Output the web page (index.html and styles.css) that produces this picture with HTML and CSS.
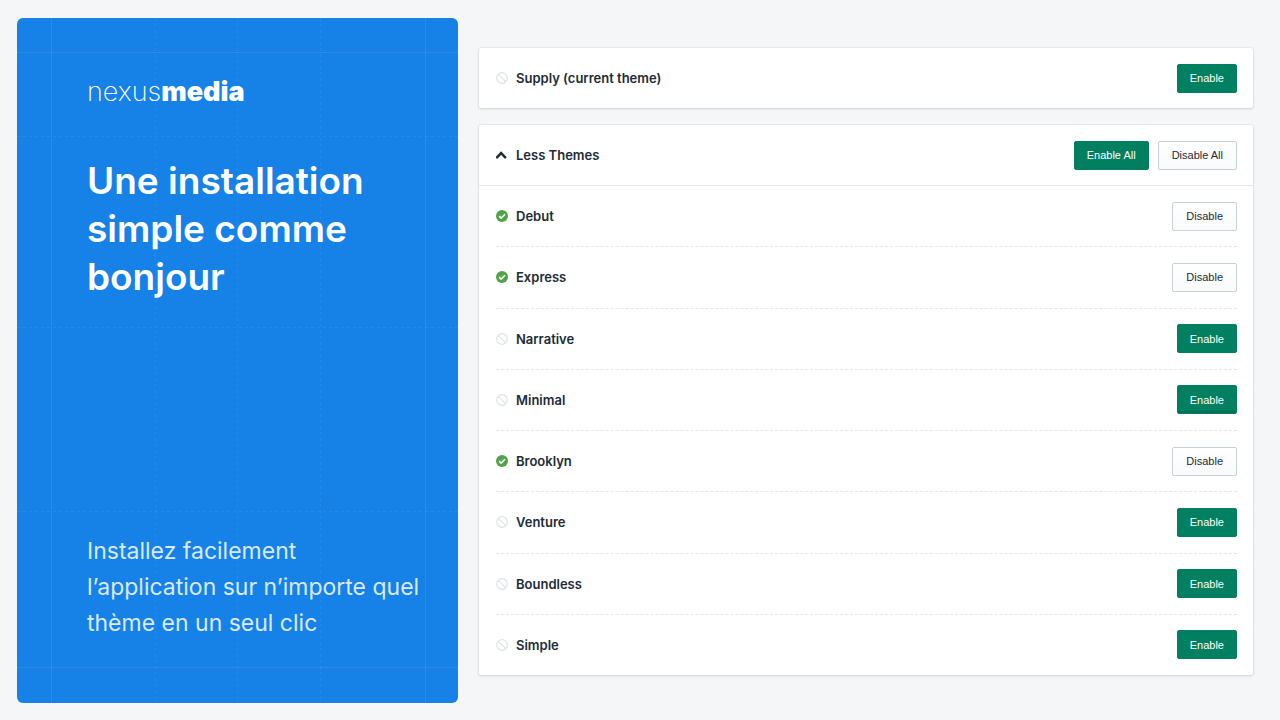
FILE: index.html
```html
<!DOCTYPE html>
<html lang="fr">
<head>
<meta charset="utf-8">
<meta name="viewport" content="width=device-width, initial-scale=1">
<title>nexusmedia</title>
<link rel="stylesheet" href="styles.css">
</head>
<body>
<svg class="sprite" aria-hidden="true">
  <symbol id="icon-off" viewBox="0 0 12 12"><g fill="none" stroke="#dfe3e8" stroke-width="1.2"><circle cx="6" cy="6" r="5.3"/><path d="M2.3 2.3l7.4 7.4"/></g></symbol>
  <symbol id="icon-on" viewBox="0 0 12 12"><circle cx="6" cy="6" r="6" fill="#50a346"/><path d="M3.1 6.1l2 2 3.9-3.9" fill="none" stroke="#fff" stroke-width="1.6"/></symbol>
  <symbol id="icon-up" viewBox="0 0 12 12"><path d="M1 8.3l4.1-4.2 4.1 4.2" fill="none" stroke="#212b36" stroke-width="2.5" stroke-linecap="round" stroke-linejoin="miter"/></symbol>
</svg>
<div class="page">
  <aside class="promo">
    <svg class="promo-grid" viewBox="0 0 441 685" preserveAspectRatio="none" aria-hidden="true">
      <path class="solid" d="M34.500 0V685M408.500 0V685M0 34.500H441M0 649.500H441"/>
      <path class="dashed" d="M138.500 0V685M220.500 0V685M303.500 0V685M0 118.500H441M0 309.500H441M0 493.500H441"/>
    </svg>
    <div class="promo-top">
      <div class="logo">nexus<b>media</b></div>
      <h1 class="headline">Une installation simple comme bonjour</h1>
    </div>
    <p class="tagline">Installez facilement l’application sur n’importe quel thème en un seul clic</p>
  </aside>
  <main class="panel">
    <section class="card row">
      <svg class="icon"><use href="#icon-off"/></svg>
      <span class="name">Supply (current theme)</span>
      <button class="btn primary">Enable</button>
    </section>
    <section class="card themes">
      <header class="row head">
        <svg class="icon"><use href="#icon-up"/></svg>
        <span class="name">Less Themes</span>
        <button class="btn primary">Enable All</button>
        <button class="btn">Disable All</button>
      </header>
      <ul class="list">
        <li class="item"><svg class="icon"><use href="#icon-on"/></svg><span class="name">Debut</span><button class="btn">Disable</button></li>
        <li class="item"><svg class="icon"><use href="#icon-on"/></svg><span class="name">Express</span><button class="btn">Disable</button></li>
        <li class="item"><svg class="icon"><use href="#icon-off"/></svg><span class="name">Narrative</span><button class="btn primary">Enable</button></li>
        <li class="item"><svg class="icon"><use href="#icon-off"/></svg><span class="name">Minimal</span><button class="btn primary hovered">Enable</button></li>
        <li class="item"><svg class="icon"><use href="#icon-on"/></svg><span class="name">Brooklyn</span><button class="btn">Disable</button></li>
        <li class="item"><svg class="icon"><use href="#icon-off"/></svg><span class="name">Venture</span><button class="btn primary">Enable</button></li>
        <li class="item"><svg class="icon"><use href="#icon-off"/></svg><span class="name">Boundless</span><button class="btn primary">Enable</button></li>
        <li class="item"><svg class="icon"><use href="#icon-off"/></svg><span class="name">Simple</span><button class="btn primary">Enable</button></li>
      </ul>
    </section>
  </main>
</div>
</body>
</html>
```
FILE: styles.css
```css
* { box-sizing: border-box; }
body {
  margin: 0;
  background: #f4f6f8;
  color: #212b36;
  font-family: Inter, "Liberation Sans", sans-serif;
}
.sprite { display: none; }
.page {
  display: grid;
  grid-template-columns: 441fr 774fr;
  gap: 21px;
  min-height: 100vh;
  padding: 18px 27px 17px 17px;
}
.promo {
  position: relative;
  display: flex;
  flex-direction: column;
  justify-content: space-between;
  padding: 56px 32px 62px 70px;
  border-radius: 6px;
  background: #1681e6;
  color: #fff;
}
.promo-grid {
  position: absolute;
  inset: 0;
  width: 100%;
  height: 100%;
}
.promo-grid path {
  fill: none;
  stroke: #fff;
  stroke-opacity: 0.09;
  vector-effect: non-scaling-stroke;
}
.promo-grid .dashed {
  stroke-dasharray: 3 3;
  stroke-opacity: 0.07;
}
.promo-top, .tagline { position: relative; }
.logo {
  font-size: 27px;
  font-weight: 200;
  line-height: 36px;
}
.logo b { font-weight: 900; }
.headline {
  max-width: 320px;
  margin: 47px 0 0;
  font-size: 37px;
  font-weight: 600;
  line-height: 48px;
}
.tagline {
  margin: 0;
  color: #d9eaff;
  font-size: 23px;
  line-height: 36px;
}
.panel {
  display: flex;
  flex-direction: column;
  gap: 17px;
  padding: 30px 0 28px;
}
.card {
  border-radius: 2px;
  background: #fff;
  box-shadow: 0 0 0 1px rgba(63, 63, 68, 0.05), 0 1px 3px rgba(63, 63, 68, 0.15);
}
.themes {
  display: flex;
  flex: 1;
  flex-direction: column;
}
.row, .item {
  display: flex;
  align-items: center;
}
.row {
  min-height: 60px;
  padding: 0 16px 0 17px;
}
.head {
  min-height: 61px;
  border-bottom: 1px solid #e3e6ea;
}
.list {
  display: flex;
  flex: 1;
  flex-direction: column;
  margin: 0;
  padding: 0 16px 0 17px;
  list-style: none;
}
.item {
  flex: 1;
  min-height: 52px;
}
.item + .item { border-top: 1px dashed #e3e6ea; }
.icon {
  flex: none;
  width: 12px;
  height: 12px;
  margin-right: 8px;
}
.name {
  flex: 1;
  font-size: 13px;
  font-weight: 600;
  line-height: 20px;
}
.btn {
  height: 29px;
  padding: 0 13px;
  border: 1px solid #c9d0d8;
  border-radius: 2px;
  background: linear-gradient(#fff, #f9fafb);
  color: #212b36;
  font-family: "Liberation Sans", Arial, sans-serif;
  font-size: 11px;
}
.btn + .btn { margin-left: 9px; }
.primary {
  padding: 0 12px;
  border-color: #008060;
  background: #008060;
  color: #fff;
}
.hovered { box-shadow: inset 0 -2px 0 #006e52; }
```
